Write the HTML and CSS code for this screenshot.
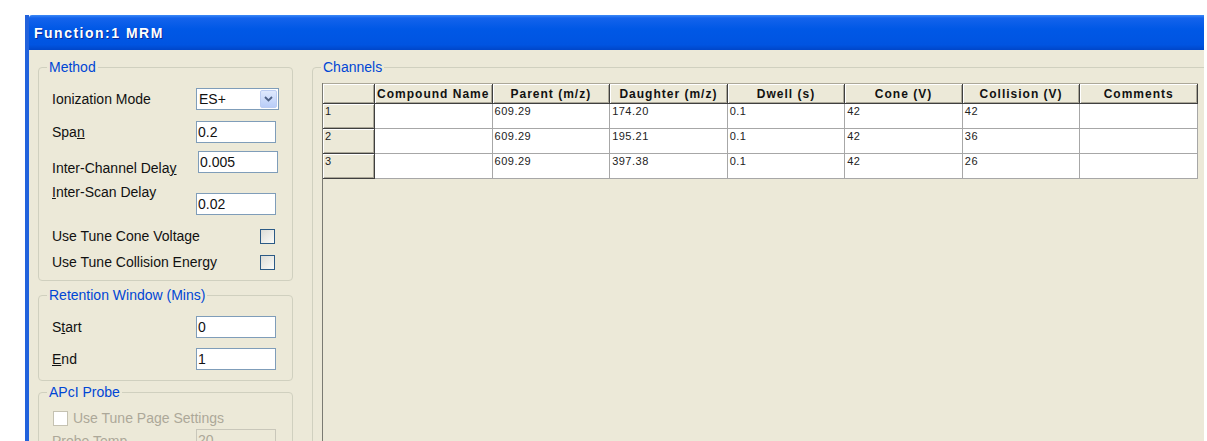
FILE: index.html
```html
<!DOCTYPE html>
<html lang="en">
<head>
    <meta charset="UTF-8">
    <title>Function:1 MRM</title>
    <link rel="stylesheet" href="styles.css">
</head>
<body>
    <div class="window">
        <div class="titlebar">Function:1 MRM</div>
        <div class="client">
            <div class="left-col">
                <fieldset class="group method">
                    <legend>Method</legend>
                    <div class="field r-ion">
                        <label>Ionization Mode</label>
                        <div class="combo">
                            <span class="combo-text">ES+</span>
                            <span class="combo-btn">
                                <svg width="9" height="6" viewBox="0 0 9 6"><path d="M1 1 L4.5 4.5 L8 1" fill="none" stroke="#4d6185" stroke-width="1.8"/></svg>
                            </span>
                        </div>
                    </div>
                    <div class="field r-span">
                        <label>Spa<u>n</u></label>
                        <input class="edit" type="text" value="0.2">
                    </div>
                    <div class="field r-chan">
                        <label class="drop">Inter-Channel Dela<u>y</u></label>
                        <input class="edit shift" type="text" value="0.005">
                    </div>
                    <div class="field r-scan">
                        <label class="lift"><u>I</u>nter-Scan Delay</label>
                        <input class="edit sink" type="text" value="0.02">
                    </div>
                    <div class="field check r-cone">
                        <label>Use Tune Cone Voltage</label>
                        <span class="checkbox"></span>
                    </div>
                    <div class="field check r-coll">
                        <label>Use Tune Collision Energy</label>
                        <span class="checkbox"></span>
                    </div>
                </fieldset>

                <fieldset class="group retention">
                    <legend>Retention Window (Mins)</legend>
                    <div class="field r-start">
                        <label>S<u>t</u>art</label>
                        <input class="edit" type="text" value="0">
                    </div>
                    <div class="field r-end">
                        <label><u>E</u>nd</label>
                        <input class="edit" type="text" value="1">
                    </div>
                </fieldset>

                <fieldset class="group apci">
                    <legend>APcI Probe</legend>
                    <div class="field r-page">
                        <span class="checkbox off"></span>
                        <label class="grey">Use Tune Page Settings</label>
                    </div>
                    <div class="field r-temp">
                        <label class="grey">Probe Temp</label>
                        <input class="edit off" type="text" value="20" disabled>
                    </div>
                </fieldset>
            </div>

            <fieldset class="group channels">
                <legend>Channels</legend>
                <div class="grid">
                    <table>
                        <colgroup>
                            <col class="c-rh">
                            <col><col><col><col><col><col><col>
                        </colgroup>
                        <tr>
                            <th></th>
                            <th>Compound Name</th>
                            <th>Parent (m/z)</th>
                            <th>Daughter (m/z)</th>
                            <th>Dwell (s)</th>
                            <th>Cone (V)</th>
                            <th>Collision (V)</th>
                            <th>Comments</th>
                        </tr>
                        <tr>
                            <td class="rh">1</td>
                            <td></td><td>609.29</td><td>174.20</td><td>0.1</td><td>42</td><td>42</td><td></td>
                        </tr>
                        <tr>
                            <td class="rh">2</td>
                            <td></td><td>609.29</td><td>195.21</td><td>0.1</td><td>42</td><td>36</td><td></td>
                        </tr>
                        <tr>
                            <td class="rh">3</td>
                            <td></td><td>609.29</td><td>397.38</td><td>0.1</td><td>42</td><td>26</td><td></td>
                        </tr>
                    </table>
                </div>
            </fieldset>
        </div>
    </div>
</body>
</html>
```

FILE: styles.css
```css
html, body {
    margin: 0;
    height: 100%;
    overflow: hidden;
    background: #fff;
}
body {
    font-family: "Liberation Sans", Arial, sans-serif;
    font-size: 14px;
    color: #111;
}
.window {
    margin: 15px 0 0 25px;
    width: 1179px;
    height: 426px;
    box-sizing: border-box;
    border-left: 4px solid #2262dc;
    overflow: hidden;
    display: flex;
    flex-direction: column;
}
.titlebar {
    height: 35px;
    flex: none;
    padding-left: 5px;
    line-height: 37px;
    color: #fff;
    font-weight: bold;
    font-size: 14px;
    letter-spacing: 1.5px;
    text-shadow: 1px 1px #0b2a9a;
    border-top-left-radius: 3px;
    background: linear-gradient(to bottom, #3d8af7 0, #1463ec 3px, #0058e6 40%, #0054e1 85%, #0046c9 100%);
}
.client {
    flex: 1;
    display: flex;
    gap: 19px;
    padding: 9px 0 0 9px;
    background: #ece9d8;
}
.left-col {
    width: 255px;
    flex: none;
    display: flex;
    flex-direction: column;
}

/* group boxes */
.group {
    margin: 0;
    padding: 0;
    min-width: 0;
    border: 1px solid #d0d0bf;
    border-radius: 4px;
}
.group legend {
    margin-left: 8px;
    padding: 0 2px;
    color: #0046d5;
    font-size: 14px;
    line-height: 16px;
}
.method {
    padding: 9px 0 6px;
}
.retention {
    margin-top: 6px;
    padding: 7px 0 5px;
}
.apci {
    margin-top: 3px;
    padding-top: 8px;
    height: 80px;
}

/* label + control rows */
.field {
    display: flex;
    align-items: center;
    padding-left: 13px;
}
.field label {
    width: 144px;
    flex: none;
    line-height: 16px;
    white-space: nowrap;
}
.field.check {
    justify-content: space-between;
    padding-right: 17px;
}
.field.check label {
    width: auto;
}
.r-ion { height: 30px; }
.r-span { height: 36px; }
.r-chan { height: 24px; }
.r-scan { height: 48px; }
.r-cone { height: 28px; }
.r-coll { height: 24px; }
.r-start { height: 33px; }
.r-end { height: 32px; }
.r-page {
    height: 20px;
    padding-left: 14px;
}
.r-page label {
    margin-left: 5px;
    width: auto;
}
.r-temp {
    height: 28px;
    align-items: flex-start;
}
.r-temp label { margin-top: 5px; }

.edit {
    width: 80px;
    height: 22px;
    box-sizing: border-box;
    margin: 0;
    padding: 0 1px;
    border: 1px solid #7f9db9;
    background: #fff;
    font-family: "Liberation Sans", Arial, sans-serif;
    font-size: 14px;
    color: #111;
    outline: none;
}
.edit.off {
    margin-top: 1px;
    border-color: #c9c7ba;
    background: #ece9d8;
    color: #aca899;
}

/* labels and boxes that sit off the row centre */
.drop { margin-top: 12px; }
.lift { margin-bottom: 12px; }
.sink { margin-top: 12px; }
.shift { margin-left: 2px; }
.grey { color: #aca899; }

.combo {
    width: 83px;
    height: 22px;
    box-sizing: border-box;
    display: flex;
    align-items: center;
    border: 1px solid #7f9db9;
    background: #fff;
}
.combo-text {
    flex: 1;
    padding-left: 2px;
}
.combo-btn {
    width: 17px;
    height: 18px;
    margin-right: 1px;
    box-sizing: border-box;
    display: flex;
    align-items: center;
    justify-content: center;
    border: 1px solid #bccdf2;
    border-radius: 2px;
    background: linear-gradient(to bottom, #dfe9fd, #b9cdf8);
}

.checkbox {
    width: 15px;
    height: 15px;
    box-sizing: border-box;
    border: 1px solid #2b5a86;
    background: linear-gradient(135deg, #dcdcd6, #fbfbf8);
}
.checkbox.off {
    border-color: #c5c2b2;
    background: #fff;
}

/* channel grid */
.channels {
    flex: 1;
    margin-right: -20px;
    padding-top: 8px;
}
.grid {
    height: 400px;
    margin-left: 9px;
    border-left: 1px solid #7a7a72;
}
.grid table {
    width: 875px;
    table-layout: fixed;
    border-collapse: separate;
    border-spacing: 0;
    border-top: 1px solid #aca899;
}
.c-rh { width: 52px; }
.grid th {
    height: 20px;
    box-sizing: border-box;
    padding: 0;
    background: #ece9d8;
    border-right: 1px solid #3f3f3f;
    border-bottom: 1px solid #3f3f3f;
    box-shadow: inset 1px 1px #fff, inset -1px -1px #aca899;
    font-size: 12px;
    font-weight: bold;
    letter-spacing: 1px;
    color: #111;
    white-space: nowrap;
    overflow: hidden;
}
.grid td {
    height: 25px;
    box-sizing: border-box;
    padding: 1px 2px;
    vertical-align: top;
    background: #fff;
    border-right: 1px solid #a7a7a7;
    border-bottom: 1px solid #a7a7a7;
    font-size: 11px;
    line-height: 12px;
    letter-spacing: 0.5px;
    color: #222;
}
.grid td.rh {
    background: #ece9d8;
    border-right: 1px solid #3f3f3f;
    border-bottom: 1px solid #3f3f3f;
    box-shadow: inset 1px 1px #fff, inset -1px -1px #aca899;
}
```
